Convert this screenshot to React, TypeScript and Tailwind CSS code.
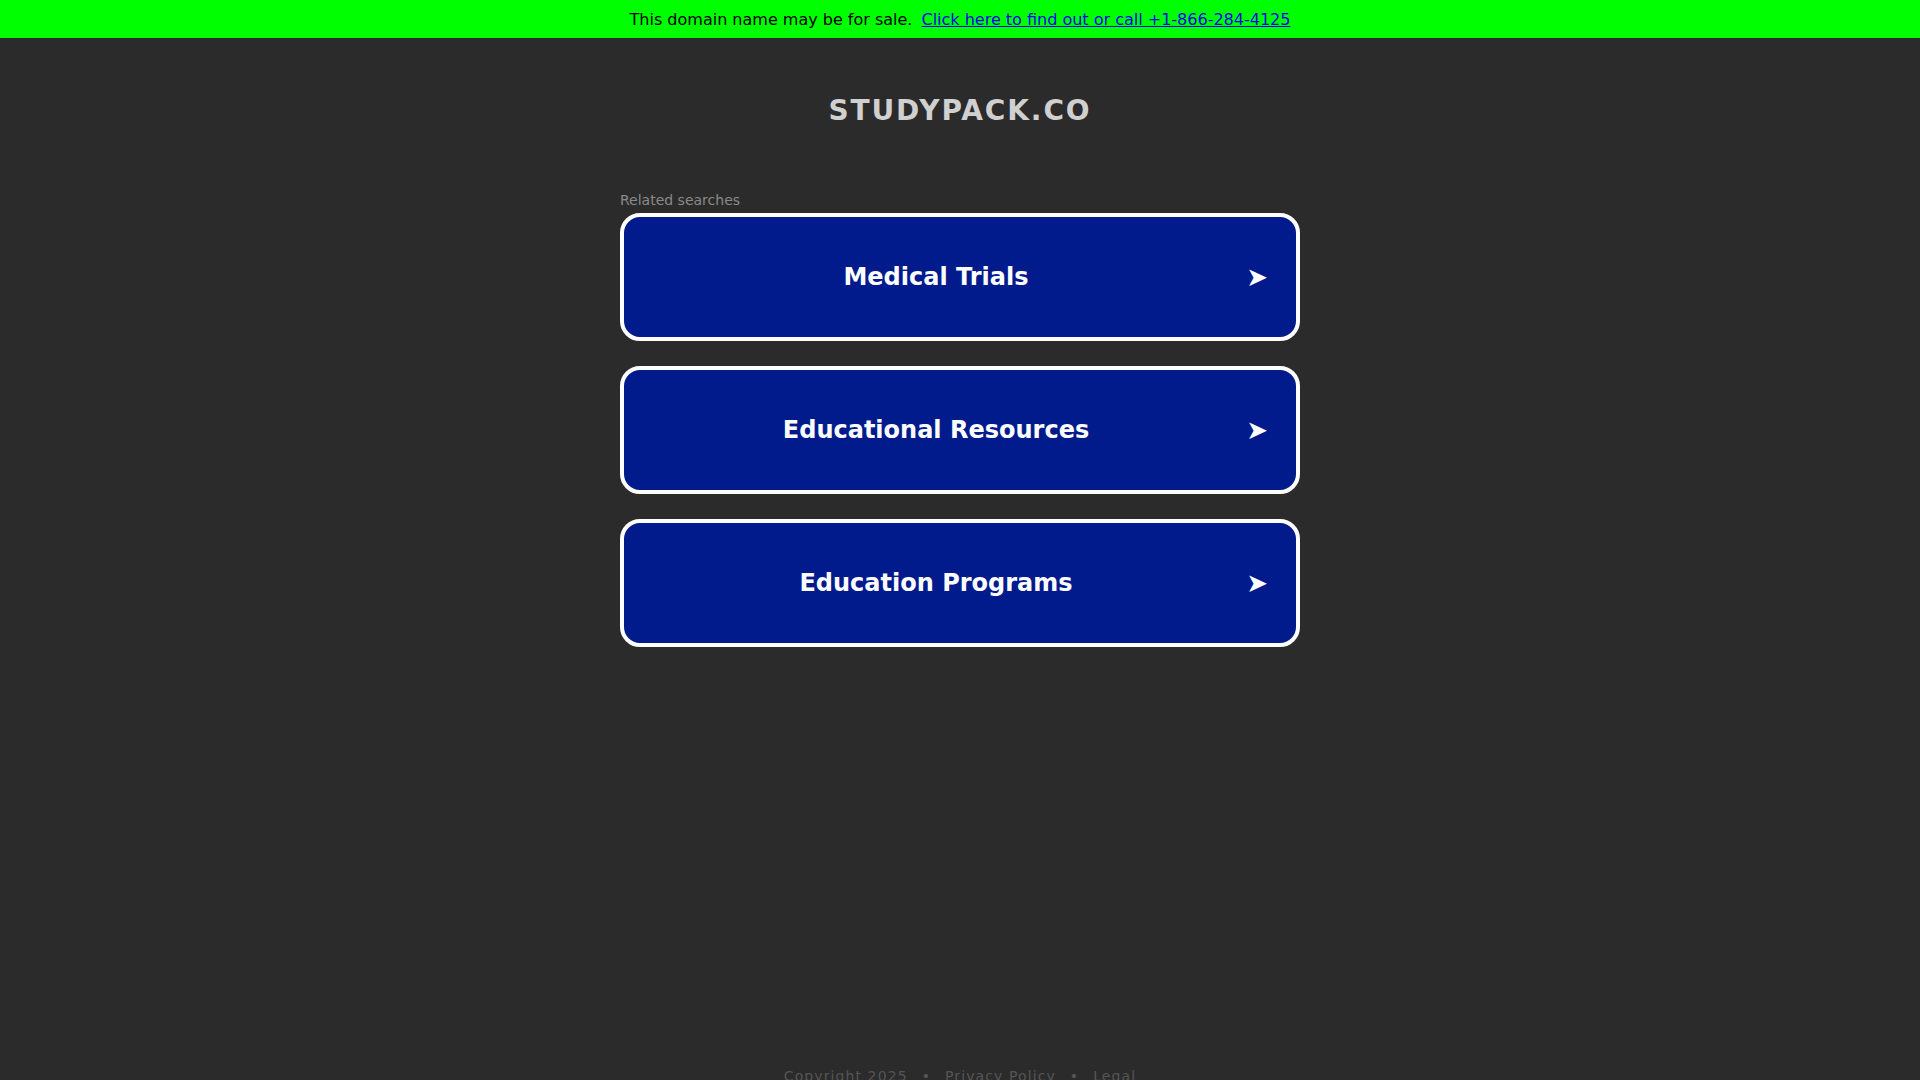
import React from "react";

const searches = ["Medical Trials", "Educational Resources", "Education Programs"];

const App: React.FC = () => {
  return (
    <div className="min-h-screen bg-[#2b2b2b] font-['DejaVu_Sans',sans-serif]">
      {/* Sale banner */}
      <div className="h-[38px] pt-[1px] bg-[#00ff00] flex items-center justify-center text-[16px] text-black">
        <span>This domain name may be for sale.</span>
        <a href="#" className="ml-[9px] text-[#0000ee] underline">
          Click here to find out or call +1-866-284-4125
        </a>
      </div>

      <div className="w-[680px] mx-auto">
        {/* Domain title */}
        <h1 className="mt-[56px] text-center text-[28px] leading-[33px] font-bold tracking-[1.9px] text-[#d0d0d0]">
          STUDYPACK.CO
        </h1>

        {/* Related searches */}
        <p className="mt-[63px] mb-[3px] text-[14px] leading-[20px] text-[#8a8a8a]">Related searches</p>
        <div className="flex flex-col gap-[25px]">
          {searches.map((s) => (
            <a
              key={s}
              href="#"
              className="flex items-center border-4 border-white rounded-[20px] bg-[#011b8c] px-[28px] pt-[46px] pb-[45px] text-white"
            >
              <span className="flex-1 text-center text-[24px] leading-[29px] font-bold">{s}</span>
              <span className="w-[48px] text-right text-[26px] leading-[29px]">➤</span>
            </a>
          ))}
        </div>
      </div>

      {/* Footer */}
      <div className="mt-[419px] pb-[20px] flex justify-center gap-[14px] text-[14px] leading-[20px] tracking-[1.1px] text-[#555555]">
        <span>Copyright 2025</span>
        <span>•</span>
        <a href="#">Privacy Policy</a>
        <span>•</span>
        <a href="#">Legal</a>
      </div>
    </div>
  );
};

export default App;
